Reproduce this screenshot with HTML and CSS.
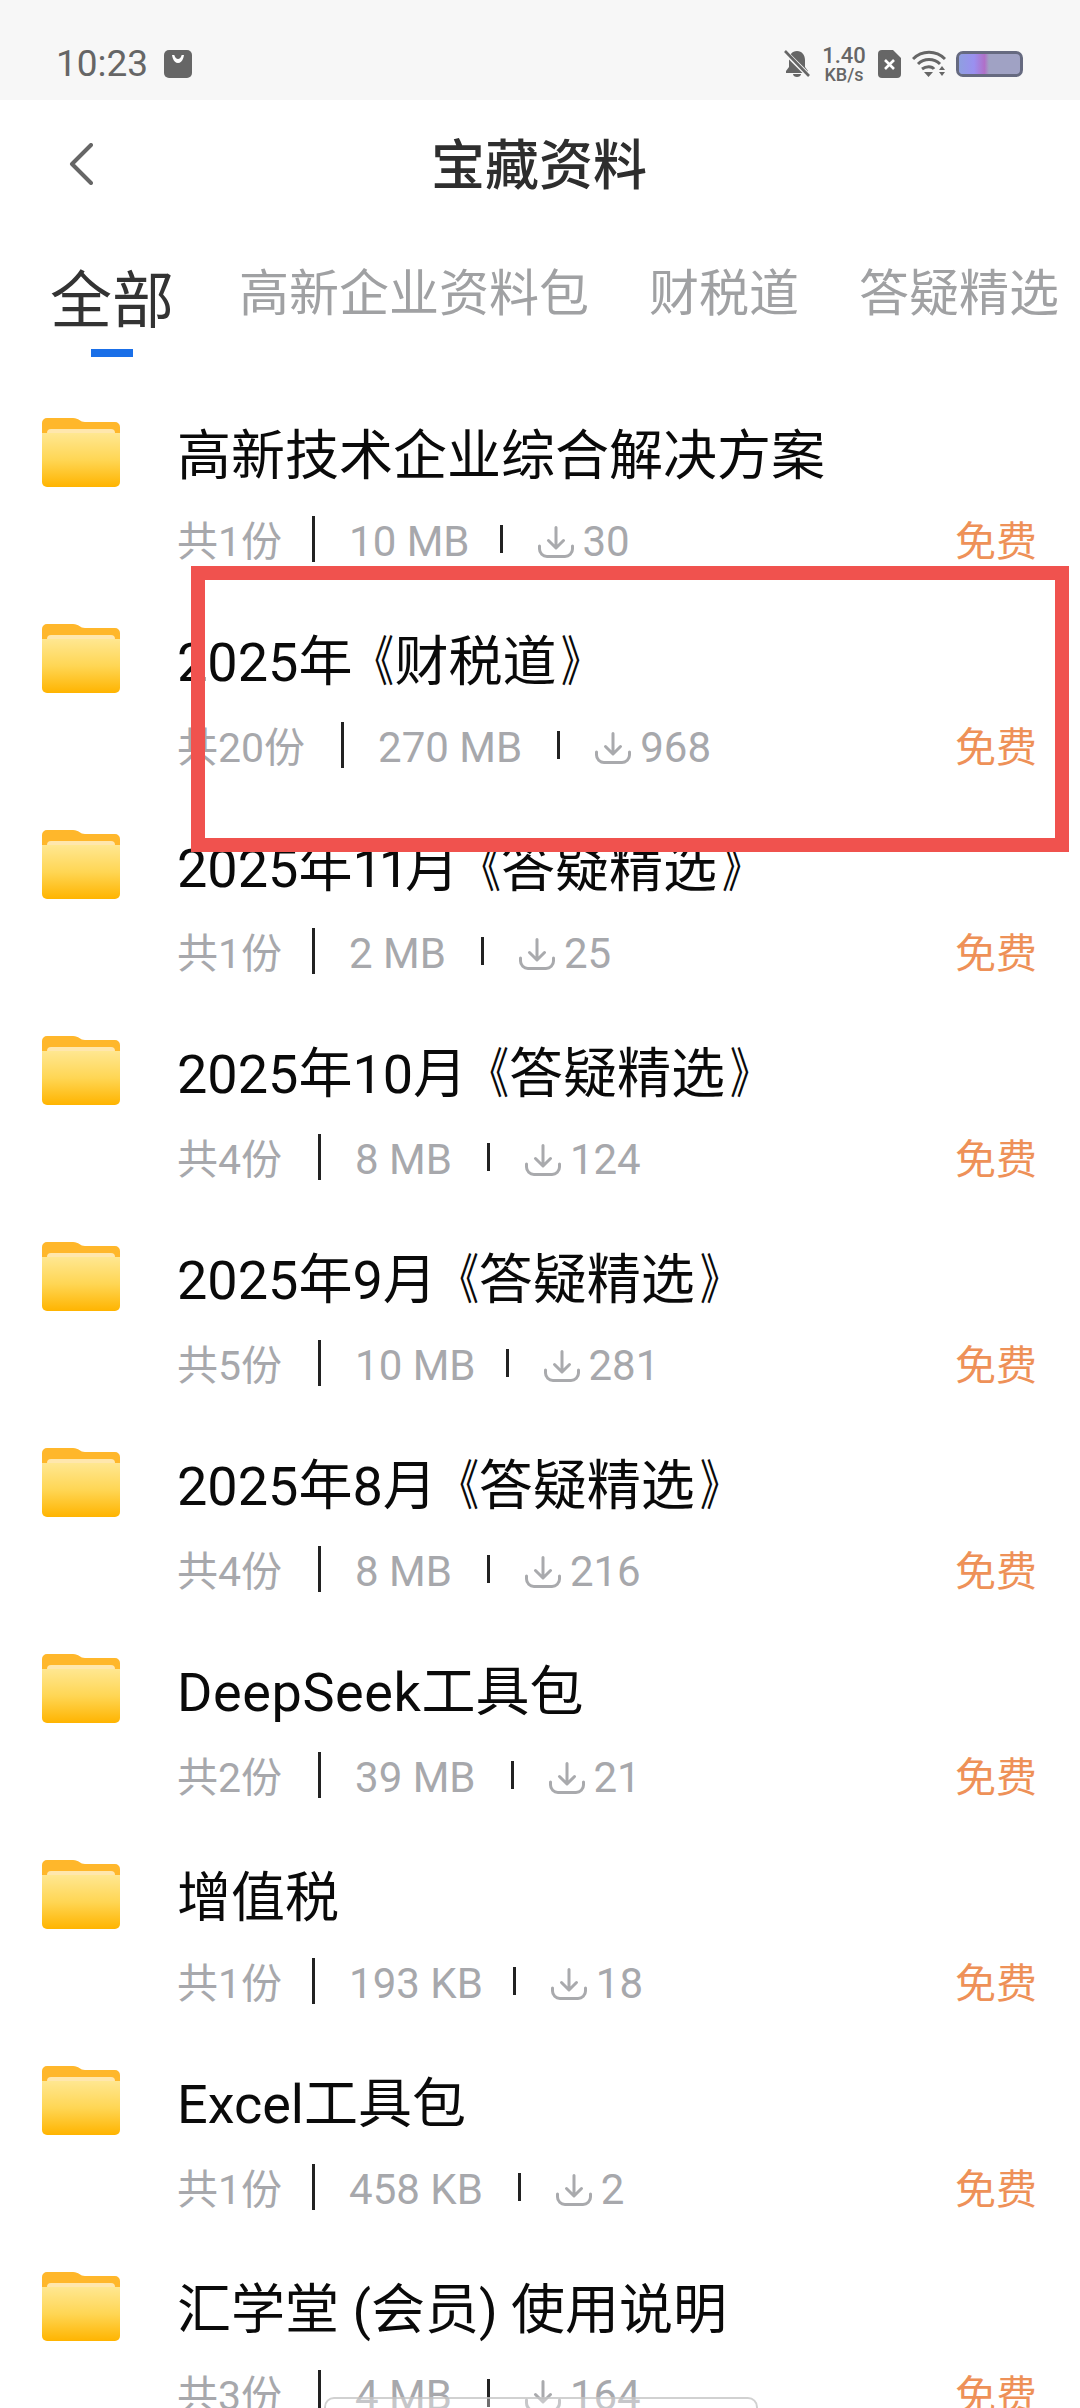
FILE: index.html
```html
<!DOCTYPE html>
<html lang="zh-CN">
<head>
<meta charset="utf-8">
<title>宝藏资料</title>
<link rel="stylesheet" href="styles.css">
</head>
<body>
<svg class="defs" width="0" height="0" aria-hidden="true">
  <defs>
    <linearGradient id="fg" x1="0" y1="0" x2="0" y2="1">
      <stop offset="0" stop-color="#ffe791"/>
      <stop offset="0.5" stop-color="#ffd654"/>
      <stop offset="1" stop-color="#ffb400"/>
    </linearGradient>
    <symbol id="folder" viewBox="0 0 78 70">
      <path d="M0 6a5 5 0 0 1 5-5h26c6 0 7 4 12 4h30a5 5 0 0 1 5 5v20H0z" fill="#ffb72b"/>
      <path d="M5 16a4 4 0 0 1 4-4h60a4 4 0 0 1 4 4v4H5z" fill="#ffe7ad"/>
      <path d="M0 16h78v49a5 5 0 0 1-5 5H5a5 5 0 0 1-5-5z" fill="url(#fg)"/>
    </symbol>
    <symbol id="dl" viewBox="0 0 36 32">
      <path d="M18 1.500v20M10.500 14.500l7.500 7.500 7.500-7.500M1.500 20v3a7.500 7.500 0 0 0 7.500 7.500h18a7.500 7.500 0 0 0 7.500-7.500v-3" fill="none" stroke="#a9aaad" stroke-width="3" stroke-linecap="round" stroke-linejoin="round"/>
    </symbol>
  </defs>
</svg>

<div class="phone">
  <header class="status">
    <div class="status-left">
      <span class="time">10:23</span>
      <svg class="bag" viewBox="0 0 28 28"><rect width="28" height="28" rx="5" fill="#666"/><path d="M8 5c0 0 1 8 6 8s6-8 6-8z" fill="#fff"/><path d="M10 4c0 0 1 5 4 5s4-5 4-5z" fill="#666"/></svg>
    </div>
    <div class="status-right">
      <svg class="bell" viewBox="0 0 26 28"><path d="M13 1c5 0 8 4 8 9v7l3 4v2H2v-2l3-4v-7c0-5 3-9 8-9zM9 24h8c0 2-2 3-4 3s-4-1-4-3z" fill="#666"/><path d="M1 2l24 24" stroke="#f7f7f7" stroke-width="5"/><path d="M1 1l24 25" stroke="#666" stroke-width="2.6"/></svg>
      <div class="speed"><span class="speed-num">1.40</span><span class="speed-unit">KB/s</span></div>
      <svg class="sim" viewBox="0 0 23 28"><path d="M4 0h11l8 8v16a4 4 0 0 1-4 4H4a4 4 0 0 1-4-4V4a4 4 0 0 1 4-4z" fill="#666"/><path d="M7 10l9 9M16 10l-9 9" stroke="#fff" stroke-width="2.6"/></svg>
      <svg class="wifi" viewBox="0 0 34 28"><g fill="none" stroke="#666" stroke-width="3"><path d="M1 9c9-9 23-9 32 0"/><path d="M6 14c6-6 16-6 22 0"/><path d="M10 19c4-3 10-3 12 0"/></g><path d="M12 22h9l-4.500 5zM27 20l3-4 3 4zM27 22h6l-3 4z" fill="#666"/></svg>
      <div class="battery"><div class="battery-fill"></div></div>
    </div>
  </header>

  <nav class="nav">
    <svg class="back" viewBox="0 0 24 42"><path d="M22 2L3 21l19 19" fill="none" stroke="#666" stroke-width="4" stroke-linecap="round" stroke-linejoin="round"/></svg>
    <h1 class="nav-title">宝藏资料</h1>
  </nav>

  <div class="tabs">
    <div class="tab tab-active">全部<span class="tab-bar"></span></div>
    <div class="tab">高新企业资料包</div>
    <div class="tab">财税道</div>
    <div class="tab">答疑精选</div>
  </div>

  <main class="list">
    <article class="row"><svg class="folder"><use href="#folder"/></svg><div class="body"><div class="name">高新技术企业综合解决方案</div><div class="meta"><span class="n1">共1份</span><i class="sep"></i><span class="num n10">10 MB</span><i class="sep sep-s"></i><svg class="dl"><use href="#dl"/></svg><span class="num">30</span><span class="free">免费</span></div></div></article>
    <article class="row"><svg class="folder"><use href="#folder"/></svg><div class="body"><div class="name">2025年<span class="ql">《</span>财税道<span class="qr">》</span></div><div class="meta"><span>共20份</span><i class="sep"></i><span class="num">270 MB</span><i class="sep sep-s"></i><svg class="dl"><use href="#dl"/></svg><span class="num">968</span><span class="free">免费</span></div></div></article>
    <article class="row"><svg class="folder"><use href="#folder"/></svg><div class="body"><div class="name">2025年<span class="n11">11</span>月<span class="ql">《</span>答疑精选<span class="qr">》</span></div><div class="meta"><span class="n1">共1份</span><i class="sep"></i><span class="num">2 MB</span><i class="sep sep-s"></i><svg class="dl"><use href="#dl"/></svg><span class="num">25</span><span class="free">免费</span></div></div></article>
    <article class="row"><svg class="folder"><use href="#folder"/></svg><div class="body"><div class="name">2025年10月<span class="ql">《</span>答疑精选<span class="qr">》</span></div><div class="meta"><span>共4份</span><i class="sep"></i><span class="num">8 MB</span><i class="sep sep-s"></i><svg class="dl"><use href="#dl"/></svg><span class="num">124</span><span class="free">免费</span></div></div></article>
    <article class="row"><svg class="folder"><use href="#folder"/></svg><div class="body"><div class="name">2025年9月<span class="ql">《</span>答疑精选<span class="qr">》</span></div><div class="meta"><span>共5份</span><i class="sep"></i><span class="num n10">10 MB</span><i class="sep sep-s"></i><svg class="dl"><use href="#dl"/></svg><span class="num">281</span><span class="free">免费</span></div></div></article>
    <article class="row"><svg class="folder"><use href="#folder"/></svg><div class="body"><div class="name">2025年8月<span class="ql">《</span>答疑精选<span class="qr">》</span></div><div class="meta"><span>共4份</span><i class="sep"></i><span class="num">8 MB</span><i class="sep sep-s"></i><svg class="dl"><use href="#dl"/></svg><span class="num">216</span><span class="free">免费</span></div></div></article>
    <article class="row"><svg class="folder"><use href="#folder"/></svg><div class="body"><div class="name"><span class="latin">DeepSeek</span>工具包</div><div class="meta"><span>共2份</span><i class="sep"></i><span class="num">39 MB</span><i class="sep sep-s"></i><svg class="dl"><use href="#dl"/></svg><span class="num">21</span><span class="free">免费</span></div></div></article>
    <article class="row"><svg class="folder"><use href="#folder"/></svg><div class="body"><div class="name">增值税</div><div class="meta"><span class="n1">共1份</span><i class="sep"></i><span class="num n10">193 KB</span><i class="sep sep-s"></i><svg class="dl"><use href="#dl"/></svg><span class="num">18</span><span class="free">免费</span></div></div></article>
    <article class="row"><svg class="folder"><use href="#folder"/></svg><div class="body"><div class="name">Excel工具包</div><div class="meta"><span class="n1">共1份</span><i class="sep"></i><span class="num">458 KB</span><i class="sep sep-s"></i><svg class="dl"><use href="#dl"/></svg><span class="num">2</span><span class="free">免费</span></div></div></article>
    <article class="row"><svg class="folder"><use href="#folder"/></svg><div class="body"><div class="name">汇学堂 (会员) 使用说明</div><div class="meta"><span>共3份</span><i class="sep"></i><span class="num">4 MB</span><i class="sep sep-s"></i><svg class="dl"><use href="#dl"/></svg><span class="num">164</span><span class="free">免费</span></div></div></article>
  </main>

  <div class="highlight"></div>
  <div class="home-pill"></div>
</div>
</body>
</html>
```

FILE: styles.css
```css
* { box-sizing: border-box; }
html, body { margin: 0; padding: 0; background: #fff; }
.defs { position: absolute; }
.phone {
  position: relative;
  width: 1080px;
  height: 2408px;
  overflow: hidden;
  background: #fff;
  font-family: "Roboto", "Noto Sans CJK SC", "Noto Sans", sans-serif;
}

.status {
  height: 100px;
  background: #f7f7f7;
  display: flex;
  align-items: flex-start;
  justify-content: space-between;
  padding: 47px 57px 0 56px;
}
.status-left { display: flex; align-items: center; gap: 16px; height: 34px; }
.time { font-size: 37px; line-height: 34px; color: #666; }
.bag { width: 28px; height: 28px; }
.status-right { display: flex; align-items: center; height: 34px; }
.bell { width: 26px; height: 28px; }
.speed {
  display: flex;
  flex-direction: column;
  align-items: center;
  width: 44px;
  margin: 0 12px;
  color: #666;
  font-weight: 500;
}
.speed-num { font-size: 22px; line-height: 20px; }
.speed-unit { font-size: 18px; line-height: 17px; }
.sim { width: 23px; height: 28px; }
.wifi { width: 34px; height: 28px; margin: 0 10px 0 11px; }
.battery {
  width: 67px;
  height: 26px;
  border: 3px solid #666a80;
  border-radius: 7px;
  overflow: hidden;
  background: #a0a2c4;
}
.battery-fill {
  width: 30px;
  height: 100%;
  background: linear-gradient(90deg, #8f9fe0 0%, #9a90f0 50%, #b070c8 85%, #a0a2c4 100%);
}

.nav { position: relative; height: 125px; display: flex; align-items: center; justify-content: center; }
.back { position: absolute; left: 69px; top: 43px; width: 24px; height: 42px; }
.nav-title { margin: 0 2px 0 0; padding-top: 8px; font-size: 54px; line-height: 60px; font-weight: 500; color: #2e2e2e; }

.tabs { height: 165px; display: flex; align-items: flex-start; padding: 41px 0 0 50px; white-space: nowrap; }
.tab { font-size: 50px; line-height: 56px; color: #a0a1a3; margin-right: 60px; }
.tab-active {
  position: relative;
  font-size: 62px;
  line-height: 70px;
  color: #333;
  margin-right: 65px;
  top: 1px;
}
.tab-bar {
  position: absolute;
  left: 41px;
  top: 82px;
  width: 42px;
  height: 8px;
  background: #1a6fe8;
}

.list { display: flex; flex-direction: column; }
.row { height: 206px; display: flex; align-items: flex-start; padding: 27px 43px 0 42px; flex: none; }
.folder { width: 78px; height: 70px; flex: none; margin-right: 57px; }
.body { flex: 1; min-width: 0; padding-top: 5px; }
.name { font-size: 54px; line-height: 70px; color: #0a0a0a; white-space: nowrap; }
.ql, .qr { display: inline-block; transform: scaleX(0.72); }
.ql { transform-origin: right center; margin-left: -12px; }
.qr { transform-origin: left center; margin-left: 5px; }
.n11 { letter-spacing: -4px; }
.latin { letter-spacing: 0.6px; }
.meta { display: flex; align-items: center; margin-top: 25px; height: 50px; font-size: 41px; line-height: 50px; color: #a7a8ac; white-space: nowrap; }
.n1 { margin-right: -6px; }
.num { font-size: 42px; }
.n10 { margin-right: -5px; }
.sep { display: block; width: 3px; height: 46px; background: #222; margin: 0 34px 7px 36px; flex: none; }
.sep-s { height: 28px; margin: 0 35px 7px 35px; }
.dl { width: 36px; height: 32px; flex: none; margin-right: 9px; }
.free { margin-left: auto; color: #ee9158; }

.highlight {
  position: absolute;
  left: 191px;
  top: 566px;
  width: 878px;
  height: 286px;
  border: 14px solid #f0524e;
}
.home-pill {
  position: absolute;
  left: 324px;
  top: 2397px;
  width: 434px;
  height: 20px;
  border-radius: 10px;
  border: 2px solid rgba(190, 190, 190, 0.7);
  background: rgba(255, 255, 255, 0.35);
}
```
